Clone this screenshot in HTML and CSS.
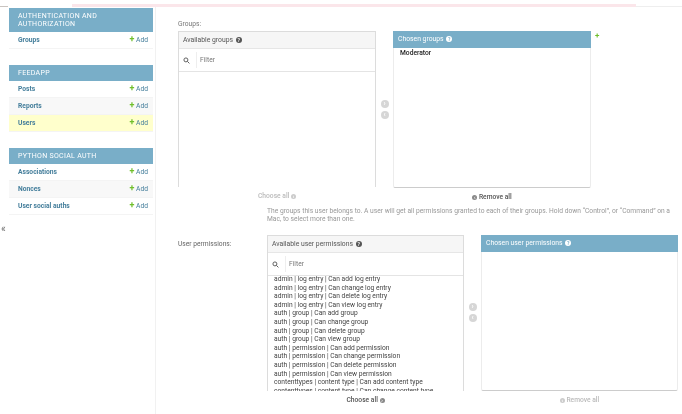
FILE: index.html
```html
<!DOCTYPE html>
<html lang="en">
  <head>
    <meta charset="UTF-8" />
    <title>Change user</title>
    <link rel="stylesheet" href="styles.css">
  </head>
  <body>
    <div class="alert-line"></div>
    <div class="page">
      <div class="toggle">«</div>
      <nav class="sidebar">
        <div class="module">
          <div class="caption two-line">AUTHENTICATION AND AUTHORIZATION</div>
          <div class="row"><span class="model">Groups</span><span class="add"><i>+</i> Add</span></div>
        </div>
        <div class="module">
          <div class="caption">FEEDAPP</div>
          <div class="row"><span class="model">Posts</span><span class="add"><i>+</i> Add</span></div>
          <div class="row alt"><span class="model">Reports</span><span class="add"><i>+</i> Add</span></div>
          <div class="row current"><span class="model">Users</span><span class="add"><i>+</i> Add</span></div>
        </div>
        <div class="module">
          <div class="caption">PYTHON SOCIAL AUTH</div>
          <div class="row"><span class="model">Associations</span><span class="add"><i>+</i> Add</span></div>
          <div class="row alt"><span class="model">Nonces</span><span class="add"><i>+</i> Add</span></div>
          <div class="row"><span class="model">User social auths</span><span class="add"><i>+</i> Add</span></div>
        </div>
      </nav>
      <main class="content">
        <section class="field groups-field">
          <label class="groups-label">Groups:</label>
          <div class="selector">
            <div class="side">
              <div class="box available groups-box">
                <div class="box-title">Available groups <b class="help">?</b></div>
                <div class="filter">
                  <svg class="lens" viewBox="0 0 12 12"><circle cx="5" cy="5" r="3.4"/><path d="M7.6 7.6 11 11"/></svg>
                  <span class="filter-text">Filter</span>
                </div>
              </div>
              <div class="all-link faded">Choose all <b class="round">›</b></div>
            </div>
            <div class="arrows"><b>›</b><b>‹</b></div>
            <div class="side">
              <div class="box chosen groups-chosen">
                <div class="box-title">Chosen groups <b class="help">?</b></div>
                <div class="option">Moderator</div>
              </div>
              <div class="all-link"><b class="round">‹</b> Remove all</div>
            </div>
            <span class="add-related">+</span>
          </div>
        </section>
        <p class="help-text">The groups this user belongs to. A user will get all permissions granted to each of their groups. Hold down “Control”, or “Command” on a Mac, to select more than one.</p>
        <section class="field perms-field">
          <label class="perms-label">User permissions:</label>
          <div class="selector">
            <div class="side">
              <div class="box available perms-box">
                <div class="box-title">Available user permissions <b class="help">?</b></div>
                <div class="filter">
                  <svg class="lens" viewBox="0 0 12 12"><circle cx="5" cy="5" r="3.4"/><path d="M7.6 7.6 11 11"/></svg>
                  <span class="filter-text">Filter</span>
                </div>
                <div class="options">
                  <div>admin | log entry | Can add log entry</div>
                  <div>admin | log entry | Can change log entry</div>
                  <div>admin | log entry | Can delete log entry</div>
                  <div>admin | log entry | Can view log entry</div>
                  <div>auth | group | Can add group</div>
                  <div>auth | group | Can change group</div>
                  <div>auth | group | Can delete group</div>
                  <div>auth | group | Can view group</div>
                  <div>auth | permission | Can add permission</div>
                  <div>auth | permission | Can change permission</div>
                  <div>auth | permission | Can delete permission</div>
                  <div>auth | permission | Can view permission</div>
                  <div>contenttypes | content type | Can add content type</div>
                  <div>contenttypes | content type | Can change content type</div>
                </div>
              </div>
              <div class="all-link">Choose all <b class="round">›</b></div>
            </div>
            <div class="arrows"><b>›</b><b>‹</b></div>
            <div class="side">
              <div class="box chosen perms-chosen">
                <div class="box-title">Chosen user permissions <b class="help">?</b></div>
              </div>
              <div class="all-link faded"><b class="round">‹</b> Remove all</div>
            </div>
          </div>
        </section>
      </main>
    </div>
  </body>
</html>
```

FILE: styles.css
```css
* {
  box-sizing: border-box;
  margin: 0;
  padding: 0;
}
html,
body {
  height: 414px;
  overflow: hidden;
}
body {
  background: #fff;
  color: #444;
  font-family: "Roboto", "Liberation Sans", sans-serif;
  font-size: 6.7px;
  filter: blur(0.5px);
  position: relative;
}
.alert-line {
  height: 3px;
  margin: 4px 46px 0 72px;
  background: #fbe6ea;
}
.alert-line::before {
  content: "";
  position: absolute;
  left: 0;
  top: 6px;
  width: 8px;
  height: 1px;
  background: #c9c4c0;
}
.alert-line::after {
  content: "";
  position: absolute;
  right: 0;
  top: 6px;
  width: 46px;
  height: 1px;
  background: #eee;
}
.page {
  display: flex;
  height: 407px;
}
.toggle {
  position: absolute;
  left: 1px;
  top: 223px;
  font-size: 10px;
  color: #666;
}
.sidebar {
  width: 156px;
  padding: 1px 2px 0 9px;
  border-right: 1px solid #f1f1f1;
  flex-shrink: 0;
}
.module {
  margin-bottom: 16px;
}
.caption {
  background: #79aec8;
  color: #fff;
  font-size: 7px;
  letter-spacing: 0.3px;
  height: 16px;
  line-height: 16px;
  padding-left: 9px;
}
.caption.two-line {
  height: 24px;
  line-height: 8px;
  padding-top: 4px;
  padding-right: 40px;
}
.row {
  display: flex;
  justify-content: space-between;
  align-items: center;
  height: 17px;
  padding: 0 5px 0 9px;
  border-bottom: 1px solid #f4f4f4;
}
.row.alt {
  background: #f8f8f8;
}
.row.current {
  background: #ffffcc;
}
.model {
  color: #447e9b;
  font-weight: 700;
}
.add {
  color: #447e9b;
}
.add i {
  color: #70bf2b;
  font-style: normal;
  font-weight: 700;
  font-size: 9px;
  line-height: 7px;
}
.content {
  flex: 1;
  padding-left: 22px;
  min-width: 0;
}
.field {
  position: relative;
}
.groups-field {
  padding-top: 13px;
}
.groups-label {
  display: block;
  color: #777;
  height: 11px;
  line-height: 8px;
}
.selector {
  display: flex;
  align-items: flex-start;
}
.side {
  width: 198px;
  flex-shrink: 0;
}
.perms-field .side {
  width: 197px;
}
.box {
  border: 1px solid #e6e6e6;
  background: #fff;
  overflow: hidden;
}
.box.available {
  border-color: #dcdcdc;
  border-bottom: 0;
}
.box.chosen {
  border-color: #ececec;
  border-top: 0;
  border-bottom-color: #ccc;
  border-radius: 2px;
  overflow: visible;
}
.groups-box {
  height: 156px;
}
.groups-chosen {
  height: 157px;
}
.perms-box,
.perms-chosen {
  height: 156px;
}
.perms-chosen {
  border-bottom-color: #e0e0e0;
}
.box-title {
  height: 17px;
  line-height: 16px;
  padding-left: 4px;
  background: #f6f6f6;
  border-bottom: 1px solid #e6e6e6;
  font-size: 6.8px;
  color: #555;
}
.chosen .box-title {
  background: #79aec8;
  border-bottom: 0;
  color: #fff;
  margin: 0 -1px;
  padding-left: 5px;
}
.help {
  display: inline-block;
  width: 6px;
  height: 6px;
  border-radius: 50%;
  background: #555;
  color: #fff;
  font-size: 5px;
  line-height: 6px;
  text-align: center;
  margin-left: 1px;
}
.chosen .help {
  background: #fff;
  color: #79aec8;
}
.filter {
  display: flex;
  align-items: center;
  height: 23px;
  border-bottom: 1px solid #e4e4e4;
  padding: 0 4px;
}
.lens {
  width: 7px;
  height: 7px;
  margin-right: 6px;
  fill: none;
  stroke: #555;
  stroke-width: 1.6;
}
.filter-text {
  flex: 1;
  height: 16px;
  line-height: 17px;
  padding-left: 3px;
  border-left: 1px solid #eee;
  color: #777;
}
.option {
  color: #222;
  font-weight: 500;
  padding: 1px 0 0 6px;
  line-height: 8px;
}
.options {
  margin-top: -1px;
  padding-left: 6px;
  color: #444;
  line-height: 8.6px;
  white-space: nowrap;
}
.arrows {
  width: 17px;
  flex-shrink: 0;
  display: flex;
  flex-direction: column;
  align-items: center;
  gap: 3px;
  padding-top: 69px;
}
.perms-field .arrows {
  padding-top: 68px;
}
.arrows b {
  width: 8px;
  height: 8px;
  border-radius: 50%;
  background: #d6d6d6;
  color: #fff;
  font-size: 7px;
  line-height: 7px;
  text-align: center;
}
.all-link {
  text-align: center;
  color: #555;
  height: 17px;
  line-height: 19px;
  font-weight: 500;
}
.all-link.faded {
  color: #bbb;
}
.round {
  display: inline-block;
  width: 5px;
  height: 5px;
  border-radius: 50%;
  background: #888;
  color: #fff;
  font-size: 5px;
  line-height: 4px;
  text-align: center;
}
.faded .round {
  background: #ccc;
}
.add-related {
  color: #70bf2b;
  font-size: 8px;
  font-weight: 700;
  line-height: 10px;
  margin-left: 4px;
}
.help-text {
  margin: 0 0 0 89px;
  padding-top: 2px;
  width: 416px;
  color: #999;
  line-height: 8px;
}
.perms-field {
  display: flex;
  padding-top: 12px;
}
.perms-label {
  width: 89px;
  flex-shrink: 0;
  padding-top: 5px;
  color: #666;
  line-height: 8px;
}
```
